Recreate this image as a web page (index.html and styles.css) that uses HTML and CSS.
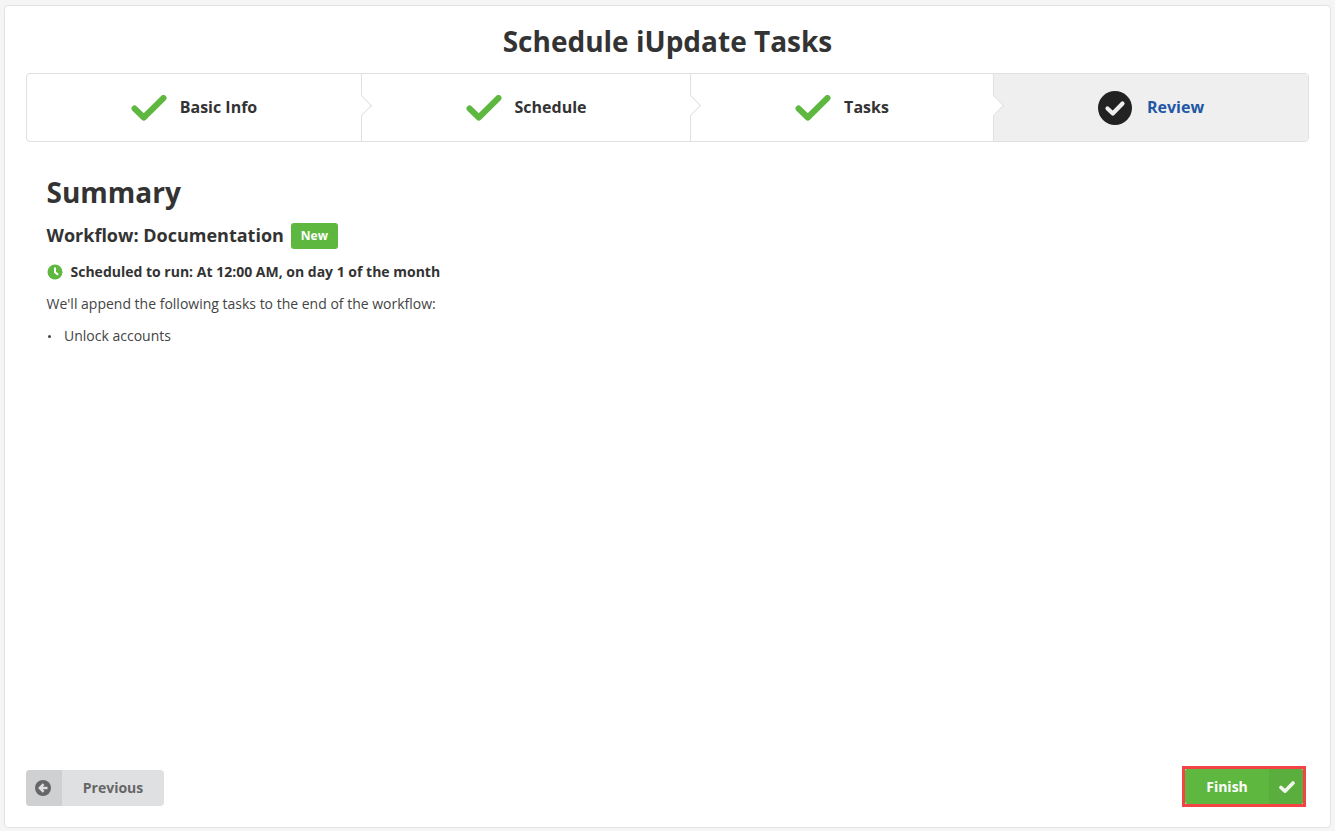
FILE: index.html
```html
<!DOCTYPE html>
<html lang="en">
<head>
<meta charset="utf-8">
<title>Schedule iUpdate Tasks</title>
<link rel="stylesheet" href="styles.css">
</head>
<body>
<main class="card">
  <h1 class="title">Schedule iUpdate Tasks</h1>
  <ol class="steps">
    <li class="step">
      <svg class="tick" viewBox="0 0 36 26"><path d="M3.5 13.5 L12.8 22.5 L32.5 3" /></svg>
      <span class="step-label">Basic Info</span>
      <i class="notch"></i>
    </li>
    <li class="step">
      <svg class="tick" viewBox="0 0 36 26"><path d="M3.5 13.5 L12.8 22.5 L32.5 3" /></svg>
      <span class="step-label">Schedule</span>
      <i class="notch"></i>
    </li>
    <li class="step">
      <svg class="tick" viewBox="0 0 36 26"><path d="M3.5 13.5 L12.8 22.5 L32.5 3" /></svg>
      <span class="step-label">Tasks</span>
      <i class="notch"></i>
    </li>
    <li class="step current">
      <svg class="disc" viewBox="0 0 34 34"><circle cx="17" cy="17" r="17" fill="#222"/><path d="M9.5 17.5 L14.8 22.5 L24.5 12.5" fill="none" stroke="#eee" stroke-width="4.2" stroke-linecap="round" stroke-linejoin="round"/></svg>
      <span class="step-label">Review</span>
    </li>
  </ol>
  <section class="summary">
    <h2 class="heading">Summary</h2>
    <h3 class="workflow"><span class="workflow-name">Workflow: Documentation</span> <span class="badge">New</span></h3>
    <p class="sched">
      <svg class="clock" viewBox="0 0 16 16"><circle cx="8" cy="8" r="7.5" fill="#5eb83f"/><path d="M8 3.4 V8.2 L11.2 10.8" fill="none" stroke="#fff" stroke-width="2"/></svg>
      Scheduled to run: At 12:00 AM, on day 1 of the month
    </p>
    <p class="para">We'll append the following tasks to the end of the workflow:</p>
    <ul class="tasks"><li>Unlock accounts</li></ul>
  </section>
  <footer class="actions">
    <button class="btn prev" type="button">
      <span class="btn-ico"><svg viewBox="0 0 16 16" width="16" height="16"><circle cx="8" cy="8" r="8" fill="#666"/><path d="M12.5 8 H5.2 M8.6 4.2 L4.8 8 L8.6 11.8" fill="none" stroke="#dfe0e2" stroke-width="2.4"/></svg></span>
      <span class="btn-label">Previous</span>
    </button>
    <div class="mark">
      <button class="btn finish" type="button">
        <span class="btn-label">Finish</span>
        <span class="btn-ico"><svg viewBox="0 0 16 14" width="16" height="14"><path d="M2 7.5 L6 11.2 L14 3" fill="none" stroke="#f2f7ee" stroke-width="3.6" stroke-linecap="round" stroke-linejoin="round"/></svg></span>
      </button>
    </div>
  </footer>
</main>
</body>
</html>
```
FILE: styles.css
```css
* { box-sizing: border-box; }
html, body { height: 100%; }
body {
  margin: 0;
  padding: 5px 4px 3px 4px;
  background: #f5f5f5;
  font-family: "Open Sans", "Liberation Sans", sans-serif;
  color: #333;
  overflow: hidden;
}
.card {
  height: 100%;
  display: flex;
  flex-direction: column;
  background: #fff;
  border: 1px solid #e2e2e2;
  border-radius: 4px;
  padding: 0 21px 20px 21px;
}
.title {
  margin: 0;
  height: 67px;
  padding-top: 16px;
  font-size: 28px;
  line-height: 39px;
  font-weight: 700;
  text-align: center;
  color: #333;
}
.steps {
  list-style: none;
  margin: 0;
  padding: 0;
  display: grid;
  grid-template-columns: 335px 329px 303px 1fr;
  height: 69px;
  border: 1px solid #e0e0e0;
  border-radius: 4px;
}
.step {
  position: relative;
  display: flex;
  align-items: center;
  justify-content: center;
  gap: 13px;
  font-size: 16px;
  font-weight: 700;
  color: #333;
  border-right: 1px solid #e0e0e0;
}
.step-label { margin-bottom: 2px; }
.step.current {
  background: #efefef;
  color: #2257a6;
  border-right: 0;
  border-radius: 0 3px 3px 0;
  gap: 15px;
}
.tick { width: 36px; height: 26px; }
.tick path {
  fill: none;
  stroke: #5eb83f;
  stroke-width: 6;
  stroke-linecap: round;
  stroke-linejoin: round;
}
.disc { width: 34px; height: 34px; }
.notch {
  position: absolute;
  z-index: 1;
  top: 24px;
  right: -8px;
  width: 15px;
  height: 15px;
  background: #fff;
  border-top: 1px solid #e0e0e0;
  border-right: 1px solid #e0e0e0;
  transform: rotate(45deg);
}
.summary { padding: 0 20px 0 20.5px; flex: 1; }
.heading {
  margin: 31px 0 0;
  font-size: 28px;
  line-height: 39px;
  font-weight: 700;
  color: #333;
}
.workflow {
  margin: 11px 0 0;
  display: flex;
  align-items: center;
  gap: 7px;
  height: 26px;
  font-size: 18px;
  font-weight: 700;
  color: #333;
}
.workflow-name { margin-bottom: 2px; }
.badge {
  display: inline-flex;
  align-items: center;
  justify-content: center;
  width: 47px;
  height: 26px;
  padding-bottom: 1px;
  background: #5eb83f;
  color: #fff;
  border-radius: 3px;
  font-size: 12px;
  font-weight: 700;
}
.sched {
  margin: 12px 0 0;
  display: flex;
  align-items: center;
  gap: 8px;
  height: 20px;
  font-size: 14px;
  font-weight: 700;
  color: #333;
}
.clock { width: 16px; height: 16px; margin-top: 1px; }
.para {
  margin: 13px 0 0;
  font-size: 14px;
  line-height: 20px;
  color: #444;
}
.tasks {
  list-style: none;
  margin: 12px 0 0;
  padding: 0;
  font-size: 14px;
  line-height: 20px;
  color: #444;
}
.tasks li { display: flex; align-items: center; }
.tasks li::before {
  content: "";
  width: 3px;
  height: 3px;
  margin: 1px 13.5px 0 1px;
  border-radius: 50%;
  background: #444;
}
.actions {
  display: flex;
  justify-content: space-between;
  align-items: flex-start;
  padding-right: 3px;
}
.btn {
  display: flex;
  align-items: stretch;
  padding: 0;
  border: 0;
  height: 36px;
  border-radius: 4px;
  font-family: inherit;
  font-size: 14px;
  font-weight: 700;
  overflow: hidden;
}
.btn-label { flex: 1; display: flex; align-items: center; justify-content: center; padding-bottom: 2px; }
.btn-ico { width: 36px; display: flex; align-items: center; justify-content: center; }
.prev { width: 138px; background: #dfe0e2; color: #666; }
.prev .btn-ico { background: #cfd0d2; padding-right: 2px; }
.mark {
  margin-top: -4px;
  border: 3px solid #f44345;
  background: #fff;
}
.finish {
  width: 118px;
  height: 35px;
  background: #5eb83f;
  color: #fff;
  border-radius: 2px;
}
.finish .btn-label { padding: 0; }
.finish .btn-ico { width: 34px; padding: 1px 0 0 1px; background: #5aae3d; }
```
